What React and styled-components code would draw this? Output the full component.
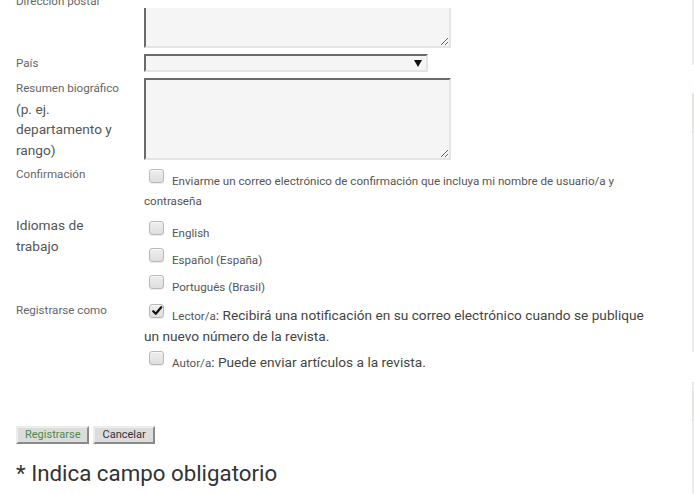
import React from "react";
import styled, { createGlobalStyle } from "styled-components";

const Global = createGlobalStyle`
  html, body { margin: 0; padding: 0; background: #fff; overflow: hidden; }
  body { font-family: Roboto, "Noto Sans", "Liberation Sans", sans-serif; color: #555; }
`;

const Page = styled.div`
  display: flex;
  width: 694px;
  height: 494px;
  overflow: hidden;
`;

const Main = styled.main`
  width: 692px;
  flex-shrink: 0;
  box-sizing: border-box;
  padding-left: 16px;
`;

const Sidebar = styled.aside`
  width: 200px;
  flex-shrink: 0;
  display: flex;
  flex-direction: column;
`;

const SideBlock = styled.div`
  box-sizing: border-box;
  height: ${(p) => p.$h}px;
  margin-top: ${(p) => p.$mt || 0}px;
  padding-top: ${(p) => p.$pt || 0}px;
  background: #ececec;
`;

const SideHead = styled.div`
  height: ${(p) => p.$h}px;
  background: #d8ecd8;
`;

const Row = styled.div`
  display: grid;
  grid-template-columns: 128px 508px;
  margin-top: ${(p) => p.$mt || 0}px;
  align-items: start;
`;

const Label = styled.div`
  font-size: 11.6px;
  line-height: ${(p) => p.$lh || 20}px;
  color: #666;
  margin-top: ${(p) => p.$mt || 0}px;
  padding-right: 22px;
`;

const BigText = styled.div`
  font-size: 13.7px;
  line-height: 20.5px;
  color: #555;
`;

const TextArea = styled.textarea`
  display: block;
  box-sizing: border-box;
  width: 307px;
  height: ${(p) => p.$h}px;
  margin: ${(p) => p.$mt || 0}px 0 0;
  padding: 2px;
  background: #f5f5f5;
  border-style: solid;
  border-width: 2px;
  border-color: #6a6a6a #e4e4e4 #e4e4e4 #6a6a6a;
  ${(p) => (p.$clipped ? "border-top-width: 0;" : "")}
  resize: both;
  font-family: inherit;
  outline: none;
`;

const Select = styled.div`
  box-sizing: border-box;
  width: 284px;
  height: 18px;
  background: #f5f5f5;
  border-style: solid;
  border-width: 2px;
  border-color: #6a6a6a #e4e4e4 #e4e4e4 #6a6a6a;
  display: flex;
  align-items: center;
  justify-content: flex-end;
  padding-right: 4px;
`;

const Arrow = styled.svg`
  width: 8px;
  height: 8px;
  display: block;
`;

const Field = styled.div`
  font-size: 11.6px;
  line-height: 20px;
  color: #555;
`;

const Option = styled.div`
  font-size: 11.6px;
  line-height: 20px;
  color: #555;
`;

const Box = styled.span`
  display: inline-block;
  box-sizing: border-box;
  width: 15px;
  height: 14px;
  margin: ${(p) => p.$mt ?? 5}px 8px 2px 5px;
  border: 1px solid #b8b8b8;
  border-radius: 3px;
  background: linear-gradient(#eeeeee, #dedede);
  box-shadow: inset 0 1px 0 #f8f8f8, 0 1px 1px rgba(0, 0, 0, 0.08);
  position: relative;
  vertical-align: baseline;
`;

const Check = styled.svg`
  position: absolute;
  left: 1px;
  top: 0px;
  width: 12px;
  height: 12px;
`;

const Desc = styled.span`
  font-size: 13.7px;
  color: #444;
`;

const Buttons = styled.div`
  display: flex;
  gap: 4px;
  margin-top: 53px;
`;

const Button = styled.button`
  box-sizing: border-box;
  height: 18px;
  padding: 0 7px;
  font-family: inherit;
  font-size: 11px;
  line-height: 14px;
  color: ${(p) => (p.$primary ? "#4b8a4b" : "#333")};
  background: #dcdcdc;
  border-style: solid;
  border-width: 2px;
  border-color: #ededed #8a8a8a #8a8a8a #ededed;
  cursor: pointer;
`;

const Required = styled.p`
  margin: 14px 0 0;
  font-size: 22.3px;
  line-height: 30px;
  color: #333;
`;

function CheckBox({ checked, mt }) {
  return (
    <Box $mt={mt}>
      {checked && (
        <Check viewBox="0 0 12 12">
          <path d="M2.2 6.2 L4.8 8.8 L10.2 2.2" fill="none" stroke="#111" strokeWidth="2.2" strokeLinecap="round" strokeLinejoin="round" />
        </Check>
      )}
    </Box>
  );
}

export default function App() {
  return (
    <>
      <Global />
      <Page>
        <Main>
          <Row>
            <Label $mt={-9}>Dirección postal</Label>
            <TextArea $h={40} $mt={8} $clipped />
          </Row>
          <Row $mt={6}>
            <Label $lh={18}>País</Label>
            <Select>
              <Arrow viewBox="0 0 8 8">
                <path d="M0 1 L8 1 L4 8 Z" fill="#111" />
              </Arrow>
            </Select>
          </Row>
          <Row $mt={6}>
            <Label $lh={20.5}>
              Resumen biográfico
              <BigText>(p. ej. departamento y rango)</BigText>
            </Label>
            <TextArea $h={82} />
          </Row>
          <Row $mt={4}>
            <Label>Confirmación</Label>
            <Field>
              <CheckBox />
              Enviarme un correo electrónico de confirmación que incluya mi nombre de usuario/a y contraseña
            </Field>
          </Row>
          <Row $mt={4}>
            <Label>
              <BigText>Idiomas de trabajo</BigText>
            </Label>
            <div>
              <Option><CheckBox mt={6} />English</Option>
              <Option><CheckBox />Español (España)</Option>
              <Option><CheckBox />Português (Brasil)</Option>
            </div>
          </Row>
          <Row $mt={3}>
            <Label>Registrarse como</Label>
            <div>
              <Field>
                <CheckBox checked mt={4} />
                Lector/a<Desc>: Recibirá una notificación en su correo electrónico cuando se publique un nuevo número de la revista.</Desc>
              </Field>
              <Option>
                <CheckBox mt={4} />
                Autor/a<Desc>: Puede enviar artículos a la revista.</Desc>
              </Option>
            </div>
          </Row>
          <Buttons>
            <Button $primary>Registrarse</Button>
            <Button>Cancelar</Button>
          </Buttons>
          <Required>* Indica campo obligatorio</Required>
        </Main>
        <Sidebar>
          <SideBlock $h={70} />
          <SideBlock $h={280} $mt={28}>
            <SideHead $h={40} />
          </SideBlock>
          <SideBlock $h={120} $mt={30} $pt={9}>
            <SideHead $h={30} />
          </SideBlock>
        </Sidebar>
      </Page>
    </>
  );
}
